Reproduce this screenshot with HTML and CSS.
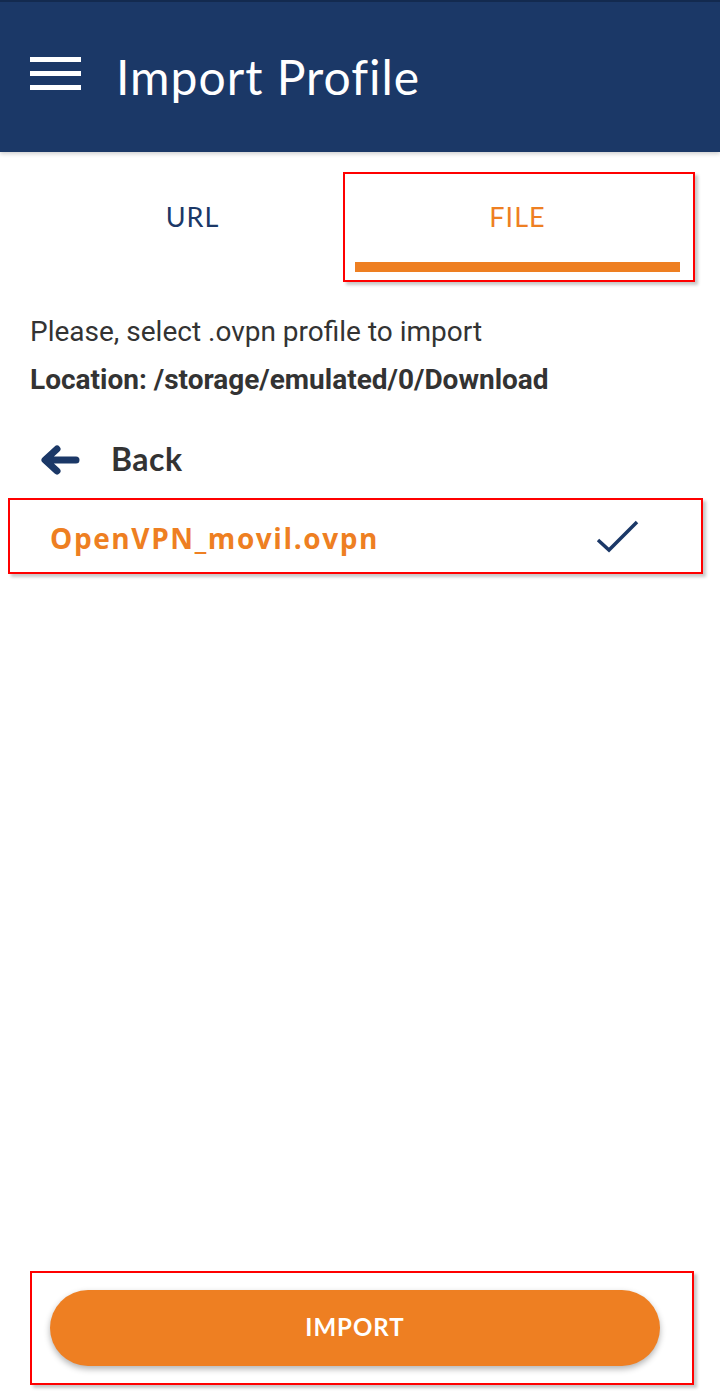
FILE: index.html
```html
<!DOCTYPE html>
<html lang="en">
<head>
  <meta charset="UTF-8" />
  <meta name="viewport" content="width=device-width, initial-scale=1.0"/>
  <title>Import Profile</title>
  <link rel="stylesheet" href="styles.css">
</head>
<body>
  <div class="screen">
    <header class="app-bar">
      <div class="menu-icon">
        <span></span><span></span><span></span>
      </div>
      <h1>Import Profile</h1>
    </header>

    <div class="tabs">
      <div class="tab">
        <span class="tab-label">URL</span>
        <span class="tab-line"></span>
      </div>
      <div class="tab active">
        <span class="tab-label">FILE</span>
        <span class="tab-line"></span>
        <span class="mark mark-tab"></span>
      </div>
    </div>

    <main class="content">
      <div class="info">
        <p>Please, select .ovpn profile to import</p>
        <p class="location">Location: /storage/emulated/0/Download</p>
      </div>

      <div class="back-row">
        <svg class="back-icon" viewBox="0 0 40 30">
          <path d="M36 15H6M17 4 5 15l12 11"/>
        </svg>
        <span>Back</span>
      </div>

      <div class="file-row">
        <span class="file-name">OpenVPN_movil.ovpn</span>
        <svg class="check-icon" viewBox="0 0 46 36">
          <path d="M4 22 15 32 43 4"/>
        </svg>
        <span class="mark mark-file"></span>
      </div>
    </main>

    <footer class="actions">
      <button class="import-btn">IMPORT</button>
      <span class="mark mark-btn"></span>
    </footer>
  </div>
</body>
</html>
```

FILE: styles.css
```css
body {
  margin: 0;
  background: #fff;
  font-family: Roboto, "Liberation Sans", sans-serif;
  color: #333;
}
.screen {
  height: 100vh;
  display: flex;
  flex-direction: column;
}
.app-bar {
  height: 150px;
  flex-shrink: 0;
  border-top: 2px solid #132a4f;
  background: #1b3867;
  display: flex;
  align-items: center;
  gap: 35px;
  padding: 0 30px;
  box-shadow: 0 2px 4px rgba(0,0,0,0.18);
  position: relative;
  z-index: 2;
}
.menu-icon {
  width: 51px;
  display: flex;
  flex-direction: column;
  gap: 9px;
  margin-top: -8px;
}
.menu-icon span {
  height: 5px;
  background: #fff;
}
.app-bar h1 {
  margin: 0 0 2px;
  font-family: Lato, sans-serif;
  font-weight: 400;
  font-size: 48px;
  letter-spacing: 1px;
  color: #fff;
}
.tabs {
  display: flex;
  padding: 0 40px 0 30px;
}
.tab {
  flex: 1;
  position: relative;
  display: flex;
  flex-direction: column;
  align-items: center;
  padding-top: 50px;
}
.tab-label {
  font-family: Lato, sans-serif;
  font-size: 27px;
  line-height: 30px;
  letter-spacing: 1px;
  color: #1b3867;
}
.tab-line {
  align-self: stretch;
  height: 10px;
  margin-top: 30px;
}
.tab.active .tab-label { color: #ee7f22; }
.tab.active .tab-line { background: #ee7f22; }

/* red annotation boxes */
.mark {
  position: absolute;
  border: 2px solid #f00;
  box-shadow: 3px 3px 3px rgba(0,0,0,0.22);
  pointer-events: none;
}
.mark-tab { left: -12px; right: -15px; top: 20px; bottom: -10px; }
.mark-file { left: 8px; right: 17px; top: -2px; bottom: 2px; }
.mark-btn { left: 30px; right: 26px; top: 0; bottom: 6px; }

.content {
  flex: 1;
  padding-top: 36px;
}
.info {
  padding: 0 30px;
}
.info p {
  margin: 0;
  font-size: 28px;
  line-height: 48px;
}
.info .location {
  font-weight: 700;
}
.back-row {
  height: 80px;
  margin-top: 16px;
  display: flex;
  align-items: center;
  padding-left: 40px;
  gap: 31px;
  font-family: Lato, sans-serif;
  font-weight: 700;
  font-size: 32px;
  letter-spacing: 0.5px;
}
.back-row span {
  margin-top: -4px;
}
.back-icon {
  width: 40px;
  height: 30px;
  fill: none;
  stroke: #1b3867;
  stroke-width: 7;
  stroke-linecap: round;
  stroke-linejoin: round;
}
.file-row {
  position: relative;
  height: 76px;
  display: flex;
  align-items: center;
  justify-content: space-between;
  padding: 0 80px 0 50px;
}
.file-name {
  font-family: "Open Sans", sans-serif;
  font-weight: 700;
  font-size: 28px;
  letter-spacing: 1.6px;
  color: #ee7f22;
}
.check-icon {
  width: 46px;
  height: 36px;
  margin-top: -4px;
  fill: none;
  stroke: #1b3867;
  stroke-width: 3.5;
}
.actions {
  position: relative;
  padding: 19px 60px 25px 50px;
}
.import-btn {
  display: block;
  width: 100%;
  height: 76px;
  padding: 0 0 3px;
  border: none;
  border-radius: 38px;
  background: #ee7f22;
  color: #fff;
  font-family: Lato, sans-serif;
  font-weight: 700;
  font-size: 24px;
  letter-spacing: 1px;
  box-shadow: 0 3px 6px rgba(0,0,0,0.3);
}
```
